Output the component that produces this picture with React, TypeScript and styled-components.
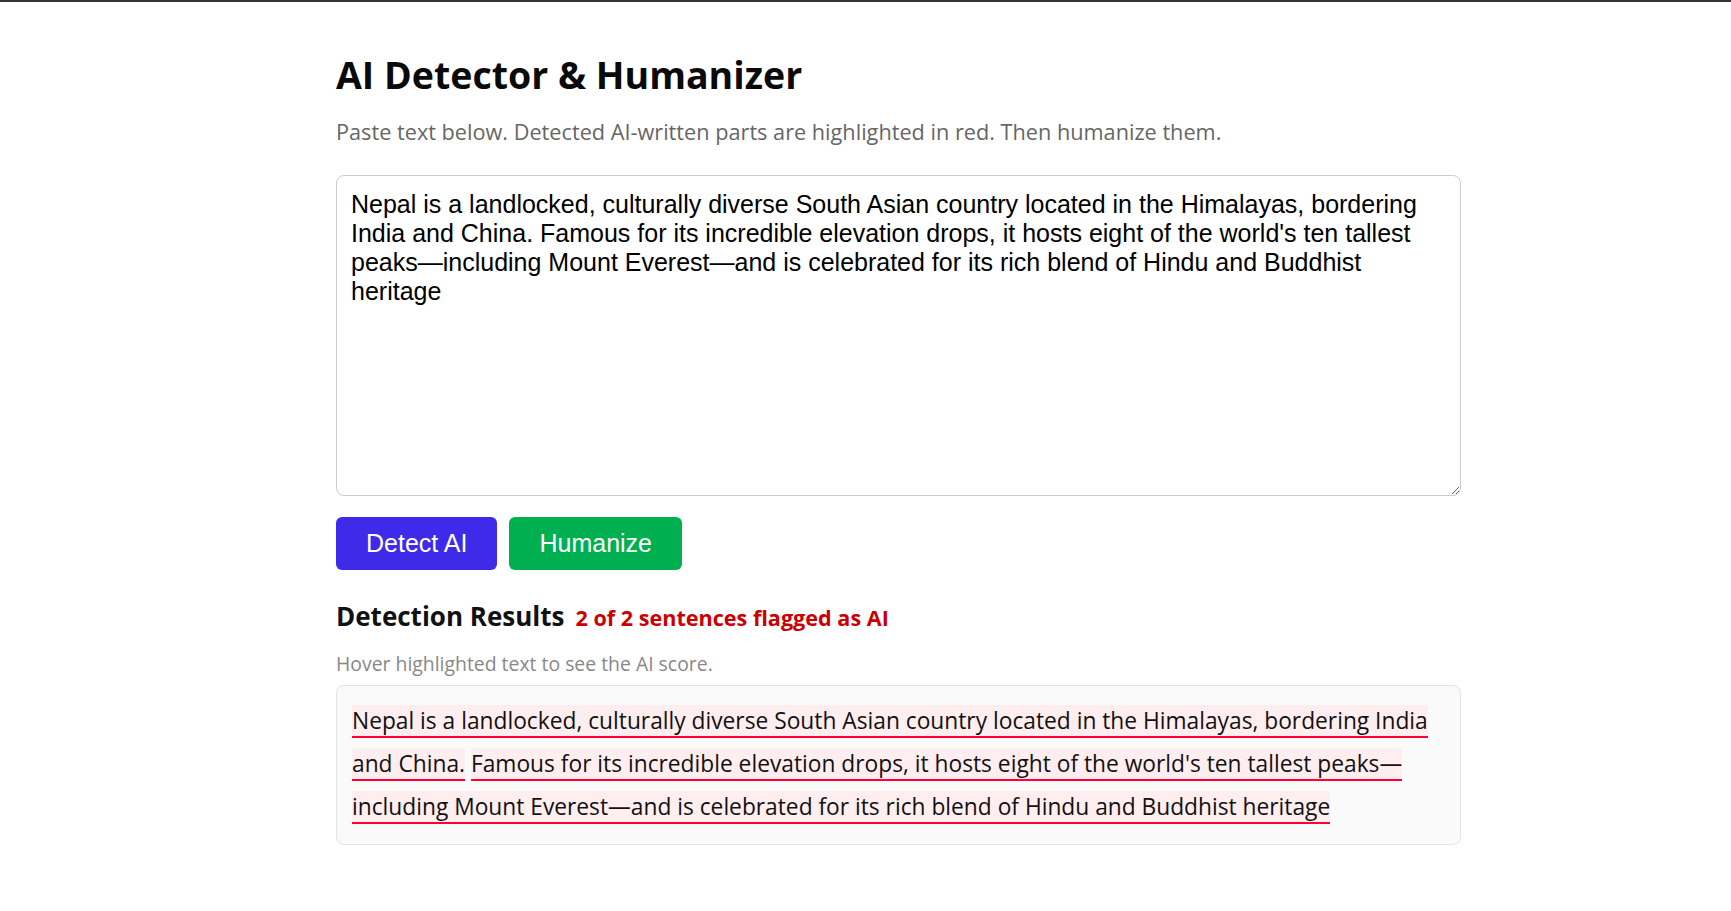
import React, { useState } from "react";
import styled, { createGlobalStyle } from "styled-components";

const GlobalStyle = createGlobalStyle`
  * {
    box-sizing: border-box;
  }

  body {
    margin: 0;
    border-top: 2px solid #333;
    background: #fff;
    font-family: "Open Sans", "Noto Sans", sans-serif;
    color: #111;
  }
`;

const Page = styled.main`
  padding: 51px 0 40px 336px;
`;

const Container = styled.div`
  width: 1125px;
  display: flex;
  flex-direction: column;
`;

const Title = styled.h1`
  margin: 0;
  font-size: 37.5px;
  line-height: 44px;
  font-weight: 700;
  color: #0a0a0a;
`;

const Subtitle = styled.p`
  margin: 20.5px 0 0;
  font-size: 21.7px;
  line-height: 28px;
  color: #666;
`;

const TextArea = styled.textarea`
  display: block;
  width: 100%;
  height: 321px;
  margin-top: 29.5px;
  padding: 14px;
  border: 1px solid #ccc;
  border-radius: 8px;
  font-family: "Liberation Sans", Arial, sans-serif;
  font-size: 25px;
  color: #000;
  resize: vertical;
  outline: none;
`;

const Toolbar = styled.div`
  display: flex;
  gap: 12px;
  margin-top: 21px;
`;

const Button = styled.button<{ $variant: "detect" | "humanize" }>`
  height: 53px;
  padding: 0 30px;
  border: none;
  border-radius: 6px;
  font-family: "Liberation Sans", Arial, sans-serif;
  font-size: 25px;
  color: #fff;
  cursor: pointer;
  background: ${(p) => (p.$variant === "detect" ? "#3e2ae8" : "#00b050")};
`;

const ResultsHeader = styled.div`
  display: flex;
  align-items: baseline;
  gap: 11px;
  margin-top: 30px;
`;

const ResultsTitle = styled.h2`
  margin: 0;
  font-size: 26px;
  line-height: 32px;
  font-weight: 700;
  color: #111;
`;

const FlagCount = styled.span`
  font-size: 21.6px;
  font-weight: 700;
  color: #cc0000;
`;

const Hint = styled.p`
  margin: 20px 0 0;
  font-size: 19.4px;
  line-height: 24px;
  color: #888;
`;

const ResultBox = styled.div`
  margin-top: 9px;
  padding: 13px 15px 15.5px;
  border: 1px solid #e4e4e4;
  border-radius: 8px;
  background: #fafafa;
  font-size: 22.75px;
  line-height: 43px;
  color: #111;
`;

const Flagged = styled.span`
  background: #ffeef0;
  border-bottom: 2px solid #ff0033;
  cursor: help;
`;

const initialText =
  "Nepal is a landlocked, culturally diverse South Asian country located in the Himalayas, bordering India and China. Famous for its incredible elevation drops, it hosts eight of the world's ten tallest peaks—including Mount Everest—and is celebrated for its rich blend of Hindu and Buddhist heritage";

const sentences = [
  { text: "Nepal is a landlocked, culturally diverse South Asian country located in the Himalayas, bordering India and China.", score: 0.93 },
  { text: "Famous for its incredible elevation drops, it hosts eight of the world's ten tallest peaks—including Mount Everest—and is celebrated for its rich blend of Hindu and Buddhist heritage", score: 0.88 },
];

const App = () => {
  const [text, setText] = useState(initialText);

  return (
    <>
      <GlobalStyle />
      <Page>
        <Container>
          <Title>AI Detector &amp; Humanizer</Title>
          <Subtitle>
            Paste text below. Detected AI-written parts are highlighted in red. Then humanize them.
          </Subtitle>
          <TextArea value={text} onChange={(e) => setText(e.target.value)} spellCheck={false} />
          <Toolbar>
            <Button $variant="detect">Detect AI</Button>
            <Button $variant="humanize">Humanize</Button>
          </Toolbar>
          <ResultsHeader>
            <ResultsTitle>Detection Results</ResultsTitle>
            <FlagCount>2 of 2 sentences flagged as AI</FlagCount>
          </ResultsHeader>
          <Hint>Hover highlighted text to see the AI score.</Hint>
          <ResultBox>
            {sentences.map((s, i) => (
              <React.Fragment key={i}>
                {i > 0 && " "}
                <Flagged title={`AI score: ${Math.round(s.score * 100)}%`}>{s.text}</Flagged>
              </React.Fragment>
            ))}
          </ResultBox>
        </Container>
      </Page>
    </>
  );
};

export default App;
